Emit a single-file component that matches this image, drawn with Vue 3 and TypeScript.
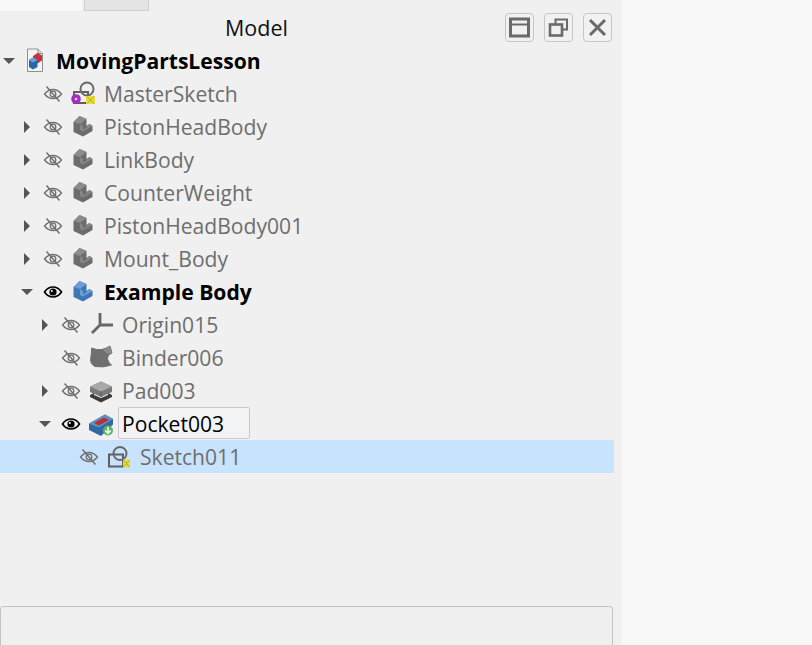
<template>
  <div class="page">
    <div class="panel">
      <div class="tabs">
        <div class="tab active"></div>
        <div class="tab"></div>
      </div>
      <div class="header">
        <span class="title">Model</span>
        <div class="header-buttons">
          <button class="hbtn">
            <svg width="23" height="23" viewBox="0 0 23 23" fill="none" stroke="#6a6a6a" stroke-width="3">
              <rect x="2.500" y="3" width="18" height="17" />
              <path d="M2.500 8.500h18" stroke-width="2" />
            </svg>
          </button>
          <button class="hbtn">
            <svg width="23" height="23" viewBox="0 0 23 23" fill="none" stroke="#6a6a6a" stroke-width="2">
              <path d="M8.500 8V3.500H20V13.500H16" />
              <rect x="3" y="8.500" width="12" height="11" stroke-width="2.600" />
            </svg>
          </button>
          <button class="hbtn">
            <svg width="23" height="23" viewBox="0 0 23 23" fill="none" stroke="#6a6a6a" stroke-width="3">
              <path d="M4 4l15 15M19 4L4 19" />
            </svg>
          </button>
        </div>
      </div>

      <div class="tree">
        <div
          v-for="row in rows"
          :key="row.name"
          class="row"
          :class="{ selected: row.selected }"
          :style="{ paddingLeft: row.level * 18 + 'px' }"
        >
          <span class="arrow">
            <i v-if="row.arrow === 'open'" class="tri-down"></i>
            <i v-else-if="row.arrow === 'closed'" class="tri-right"></i>
          </span>

          <span v-if="row.eye" class="eye">
            <svg v-if="row.eye === 'off'" width="20" height="18" viewBox="0 0 20 18" fill="none" stroke="#707070">
              <path d="M1.500 9C4 5.800 7 4.500 10 4.500S16 5.800 18.500 9C16 12.200 13 13.500 10 13.500S4 12.200 1.500 9Z" stroke-width="1.300" />
              <circle cx="10" cy="9" r="2.800" stroke-width="1.300" />
              <path d="M3.500 1.500L16.500 16.500" stroke-width="1.500" />
            </svg>
            <svg v-else width="20" height="18" viewBox="0 0 20 18">
              <path d="M1.500 9C4 5.300 7 4 10 4S16 5.300 18.500 9C16 12.700 13 14 10 14S4 12.700 1.500 9Z" fill="none" stroke="#000" stroke-width="1.700" />
              <circle cx="10" cy="9" r="3.600" fill="#000" />
              <circle cx="8.800" cy="8" r="1" fill="#fff" />
            </svg>
          </span>

          <span class="icon">
            <svg v-if="row.icon === 'doc'" width="20" height="25" viewBox="0 0 20 25">
              <path d="M1.500 1H12L16.500 5.500V23.500H1.500Z" fill="#f4f4f4" stroke="#8f8f8f" />
              <path d="M12 1V5.500H16.500" fill="#d8d8d8" stroke="#8f8f8f" />
              <path d="M7 8L11.500 5L16 7.500V12.500L11.500 15.500L7 13Z" fill="#c8303a" />
              <path d="M3 12L7 9.500L11.500 12V19L7 21.500L3 19Z" fill="#2a67a8" />
              <path d="M3 12L7 9.500L11.500 12L7 14.500Z" fill="#6fa3d6" />
            </svg>
            <svg v-else-if="row.icon === 'body' || row.icon === 'bodyActive'" width="22" height="22" viewBox="-1 1 22 22">
              <path d="M1.500 7L7.500 1L14.500 4V11L17.500 9L20.500 11V16L11 21.500L1.500 17Z" :fill="row.icon === 'body' ? '#6c6c6c' : '#3f77b5'" />
              <path d="M1.500 7L7.500 1L14.500 4L8 9Z" :fill="row.icon === 'body' ? '#8c8c8c' : '#6b9fd4'" />
              <path d="M8 9V15L11 16.500L20.500 11L17.500 9L14.500 11V12.500L11 14.500V11Z" :fill="row.icon === 'body' ? '#868686' : '#6b9fd4'" />
            </svg>
            <svg v-else-if="row.icon === 'sketch'" width="24" height="24" viewBox="0 0 24 24">
              <rect x="3" y="9.500" width="14" height="12" fill="none" stroke="#5f5f5f" stroke-width="2" />
              <circle cx="14" cy="8.500" r="6.500" fill="none" stroke="#6a6a6a" stroke-width="2" />
              <path d="M17 14.500h7v8h-7z" fill="#e6dc3a" />
              <path d="M17.500 15l6 7M23.500 15l-6 7" stroke="#b9a92a" stroke-width="1" />
            </svg>
            <svg v-else-if="row.icon === 'master'" width="24" height="24" viewBox="0 0 24 24" overflow="visible">
              <rect x="4" y="10" width="14" height="11" fill="none" stroke="#5f5f5f" stroke-width="2" />
              <circle cx="17" cy="7" r="6.500" fill="none" stroke="#6a6a6a" stroke-width="2" />
              <circle cx="6" cy="17" r="4.800" fill="#a42dbb" />
              <circle cx="6" cy="17" r="1.300" fill="#eed6f2" />
              <path d="M16 14h9v8h-9z" fill="#e6dc3a" />
              <path d="M17 14.500l7 7M24 14.500l-7 7" stroke="#b9a92a" stroke-width="1" />
            </svg>
            <svg v-else-if="row.icon === 'origin'" width="24" height="24" viewBox="0 0 24 24" fill="none" stroke="#666" stroke-width="2.800" overflow="visible">
              <path d="M12 0v12M12 12h13M12 12L4 20" />
            </svg>
            <svg v-else-if="row.icon === 'binder'" width="24" height="24" viewBox="0 0 24 24" overflow="visible">
              <path d="M3.700 2Q9 4.500 13.700 3.500Q18 2.500 22 0L24 7Q19 9 19.700 13.500Q20.500 17 23.500 19Q15 22 7 20.500Q2 18 2.700 13Q3.500 7 3.700 2Z" fill="#6f6f6f" stroke="#6f6f6f" stroke-linejoin="round" />
              <path d="M15 3.500L22 0L24 7L19 8Z" fill="#8a8a8a" />
            </svg>
            <svg v-else-if="row.icon === 'pad'" width="24" height="24" viewBox="0 0 24 24" overflow="visible">
              <path d="M2 7.500L13 2.500L24 7.500V13L13 18L2 13Z" fill="#7a7a7a" />
              <path d="M2 7.500L13 2.500L24 7.500L13 12.500Z" fill="#a8a8a8" />
              <path d="M13 12.500V18" stroke="#555" stroke-width="1" />
              <path d="M2 16L6 14V16L13 19L20 16V14L24 16V18L13 23.500L2 18Z" fill="#3c3c3c" />
            </svg>
            <svg v-else width="24" height="24" viewBox="0 0 24 24" overflow="visible">
              <path d="M1 11.500L17 2.500L25 7V12.500L13 24L1 18Z" fill="#2f69a6" />
              <path d="M1 11.500L17 2.500L25 7L11 15.500Z" fill="#5f91c4" />
              <path d="M6 11L16 5.500L21 8L11 13.500Z" fill="#b72e34" />
              <circle cx="20" cy="18.500" r="5" fill="#5cb85c" />
              <path d="M20 15v6M17.300 18.500l2.700 3 2.700-3" fill="none" stroke="#fff" stroke-width="1.500" />
            </svg>
          </span>

          <span v-if="row.editing" class="name editing">{{ row.name }}</span>
          <span v-else class="name" :class="{ bold: row.bold, top: row.level === 0 }">{{ row.name }}</span>
        </div>
      </div>

      <div class="bottom-box"></div>
    </div>
    <div class="side"></div>
  </div>
</template>

<script setup lang="ts">
interface TreeRow {
  name: string
  level: number
  arrow?: 'open' | 'closed'
  eye?: 'on' | 'off'
  icon: string
  bold?: boolean
  editing?: boolean
  selected?: boolean
}

const rows: TreeRow[] = [
  { name: 'MovingPartsLesson', level: 0, arrow: 'open', icon: 'doc', bold: true },
  { name: 'MasterSketch', level: 1, eye: 'off', icon: 'master' },
  { name: 'PistonHeadBody', level: 1, arrow: 'closed', eye: 'off', icon: 'body' },
  { name: 'LinkBody', level: 1, arrow: 'closed', eye: 'off', icon: 'body' },
  { name: 'CounterWeight', level: 1, arrow: 'closed', eye: 'off', icon: 'body' },
  { name: 'PistonHeadBody001', level: 1, arrow: 'closed', eye: 'off', icon: 'body' },
  { name: 'Mount_Body', level: 1, arrow: 'closed', eye: 'off', icon: 'body' },
  { name: 'Example Body', level: 1, arrow: 'open', eye: 'on', icon: 'bodyActive', bold: true },
  { name: 'Origin015', level: 2, arrow: 'closed', eye: 'off', icon: 'origin' },
  { name: 'Binder006', level: 2, eye: 'off', icon: 'binder' },
  { name: 'Pad003', level: 2, arrow: 'closed', eye: 'off', icon: 'pad' },
  { name: 'Pocket003', level: 2, arrow: 'open', eye: 'on', icon: 'pocket', editing: true },
  { name: 'Sketch011', level: 3, eye: 'off', icon: 'sketch', selected: true }
]
</script>

<style>
html,
body {
  margin: 0;
  background: #f8f8f8;
}
</style>

<style scoped>
.page {
  display: flex;
  width: 812px;
  height: 645px;
  overflow: hidden;
  font-family: "Open Sans", "Noto Sans", sans-serif;
  background: #f8f8f8;
}

.panel {
  display: flex;
  flex-direction: column;
  width: 622px;
  height: 645px;
  flex-shrink: 0;
  background: #f0f0f0;
}

.tabs {
  display: flex;
  gap: 2px;
  height: 11px;
}

.tab {
  width: 63px;
  height: 10px;
  background: #e4e4e4;
  border: 1px solid #cfcfcf;
  border-top: none;
}

.tab.active {
  width: 82px;
  height: 11px;
  background: #f8f8f8;
  border: none;
}

.header {
  display: flex;
  align-items: center;
  justify-content: flex-end;
  height: 33px;
  padding-right: 10px;
  position: relative;
}

.title {
  position: absolute;
  left: 225px;
  top: 3px;
  font-size: 21.500px;
  line-height: 27px;
  color: #111;
}

.header-buttons {
  display: flex;
  gap: 10px;
}

.hbtn {
  display: flex;
  align-items: center;
  justify-content: center;
  width: 29px;
  height: 29px;
  padding: 0;
  background: #f1f1f1;
  border: 1px solid #c6c6c6;
  border-radius: 4px;
}

.hbtn svg {
  flex-shrink: 0;
}

.tree {
  flex: 1;
  width: 614px;
}

.row {
  display: flex;
  align-items: center;
  height: 33px;
}

.row.selected {
  background: #c8e3fd;
}

.arrow {
  display: flex;
  align-items: center;
  justify-content: center;
  width: 18px;
  flex-shrink: 0;
}

.tri-down {
  width: 0;
  height: 0;
  border-left: 6px solid transparent;
  border-right: 6px solid transparent;
  border-top: 6px solid #555;
}

.tri-right {
  width: 0;
  height: 0;
  border-top: 6px solid transparent;
  border-bottom: 6px solid transparent;
  border-left: 6px solid #555;
}

.eye {
  display: flex;
  align-items: center;
  justify-content: center;
  width: 22px;
  margin-left: 6px;
  flex-shrink: 0;
}

.icon {
  display: flex;
  align-items: center;
  justify-content: center;
  width: 20px;
  margin-left: 8px;
  flex-shrink: 0;
}

.icon svg {
  flex-shrink: 0;
}

.name {
  margin-left: 12px;
  font-size: 21.100px;
  line-height: 28px;
  color: #6e6e6e;
  white-space: nowrap;
}

.name.top {
  margin-left: 10px;
}

.name.bold {
  font-weight: 700;
  color: #000;
}

.name.editing {
  align-self: flex-start;
  margin-left: 8px;
  width: 127px;
  height: 30px;
  padding-left: 3px;
  line-height: 32px;
  color: #000;
  background: #f2f3f5;
  border: 1px solid #c9c9c9;
  border-radius: 2px;
}

.bottom-box {
  width: 611px;
  height: 38px;
  border: 1px solid #c4c4c4;
  border-bottom: none;
  border-radius: 4px 4px 0 0;
  background: #f0f0f0;
}

.side {
  flex: 1;
  background: #f8f8f8;
}
</style>
